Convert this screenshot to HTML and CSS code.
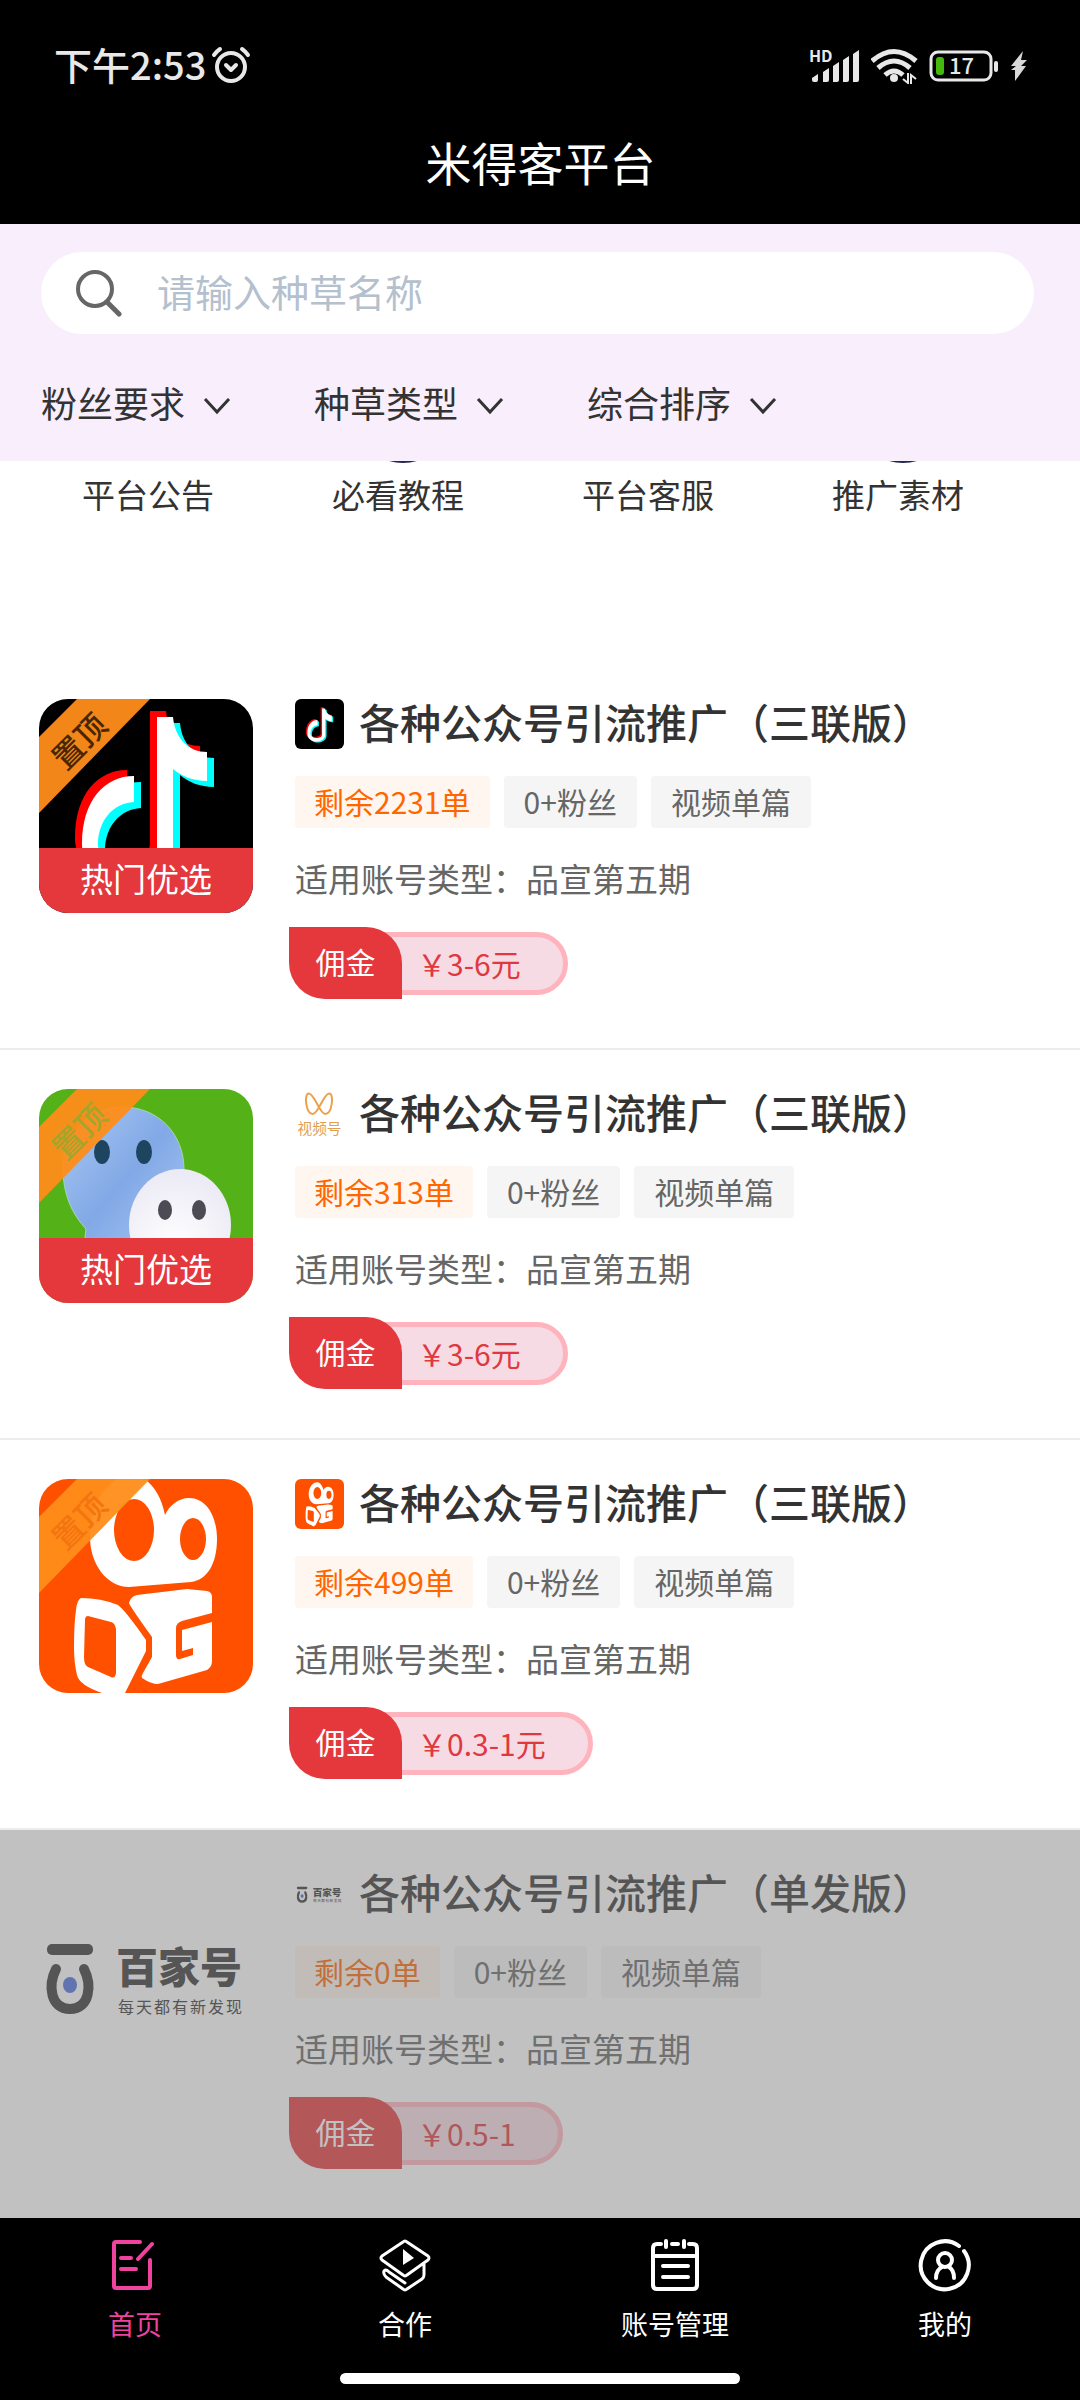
FILE: index.html
```html
<!DOCTYPE html>
<html lang="zh-CN">
<head>
  <meta charset="UTF-8" />
  <meta name="viewport" content="width=device-width, initial-scale=1" />
  <title>米得客平台</title>
  <link rel="stylesheet" href="styles.css">
</head>
<body>
  <!-- shared logos -->
  <svg class="defs" width="0" height="0" aria-hidden="true">
    <defs>
      <linearGradient id="blueFace" x1="0" y1="0" x2="1" y2="1">
        <stop offset="0" stop-color="#a9c8f3" />
        <stop offset="0.5" stop-color="#82a9e6" />
        <stop offset="1" stop-color="#a9c6f3" />
      </linearGradient>
      <radialGradient id="whiteFace" cx="0.45" cy="0.7" r="0.7">
        <stop offset="0" stop-color="#ffffff" />
        <stop offset="1" stop-color="#ebeaf5" />
      </radialGradient>
      <path id="note" d="M118 18H134C136 40 150 53 168 53V82C154 82 142 77 134 70V150C134 170 115 186 89 186C63 186 43 170 43 145C43 101 66 77 95 77V103C74 104 59 122 59 145C59 160 72 168 90 168C105 168 118 163 118 150Z" />
      <symbol id="douyin" overflow="visible">
        <use href="#note" x="-7" y="-6" fill="#ff0000" />
        <use href="#note" x="7" y="6" fill="#00ffff" />
        <use href="#note" fill="#ffffff" />
      </symbol>
      <symbol id="kuaishou" overflow="visible">
        <g fill="#ffffff" fill-rule="evenodd">
          <path d="M51 58C51 25 68-4 95-4C110-2 122 15 126 36C130 27 139 19 150 19C168 19 178 38 178 60C178 85 168 101 152 103L90 108C68 108 51 85 51 58ZM75 51a20 31 0 1 0 40 0a20 31 0 1 0-40 0ZM141 60a13 21 0 1 0 26 0a13 21 0 1 0-26 0Z" />
          <path d="M42 119Q62 119 79 126Q86 131 107 161V172L86 214L76 222L63 214Q40 206 38 196Q35 184 35 168Q35 145 37 131Q38 121 42 119ZM49 137Q46 137 46 141L45 178Q45 186 49 188L72 198Q76 200 77 194V150Q76 144 72 143Z" />
          <path d="M90 124Q92 117 98 116L148 110L168 112Q173 113 173 118V134L143 142Q137 144 137 149V176Q137 181 141 180L154 176V169L143 172V151L173 143V182Q173 188 168 191L119 205Q112 205 103 199Q102 197 104 194L113 178V158Q92 129 90 124Z" />
        </g>
      </symbol>
      <symbol id="baijia" overflow="visible">
        <rect x="8" y="75" width="46" height="11" rx="5" fill="#333" />
        <path d="M17 100C9 116 11 140 31 140C51 140 53 116 45 100" fill="none" stroke="#333" stroke-width="10" stroke-linecap="round" />
        <ellipse cx="31" cy="116" rx="7" ry="8" fill="#4a6fe0" />
        <text class="baijia-name" x="77" y="114">百家号</text>
        <text class="baijia-slogan" x="79 97 115 133 151 169 187" y="144">每天都有新发现</text>
      </symbol>
      <symbol id="ribbon" overflow="visible">
        <path d="M38 0H111L0 114V38Z" fill="#ff8d19" fill-opacity="0.95" />
      </symbol>
    </defs>
  </svg>

  <header class="top">
    <div class="status">
      <div class="status-side">
        <span class="time">下午2:53</span>
        <svg width="40" height="40" viewBox="0 0 40 40" fill="none" stroke="#e8e8e8" stroke-width="4" stroke-linecap="round" stroke-linejoin="round">
          <circle cx="20" cy="21" r="14" />
          <path d="M15 19l5 5 5-5" />
          <path d="M3 9q3-4 6-6M37 9q-3-4-6-6" />
        </svg>
      </div>
      <div class="status-side status-right">
        <svg width="51" height="48" viewBox="0 -6 51 48" fill="#e8e8e8">
          <text class="hd" x="0" y="14">HD</text>
          <path d="M3 34v-4l6-4v6q0 2-2 2H5q-2 0-2-2M14 34V24l6-4v12q0 2-2 2zM24 34V18l6-4v18q0 2-2 2zM34 34V12l6-4v24q0 2-2 2zM44 34V6l6-4v30q0 2-2 2z" />
        </svg>
        <svg width="47" height="36" viewBox="0 0 47 36" fill="none" stroke="#e8e8e8" stroke-width="5">
          <path d="M1 13Q23 -6 45 13M7 20Q23 6 39 20M14 27Q23 19 32 27" />
          <circle cx="23" cy="30" r="4" fill="#e8e8e8" stroke="none" />
          <path d="M37 25v10l-5-4M40 36V27l5 4" stroke-width="2" />
        </svg>
        <svg width="70" height="48" viewBox="0 -8 70 48">
          <rect x="2" y="2" width="60" height="28" rx="7" fill="none" stroke="#e8e8e8" stroke-width="3" />
          <rect x="65" y="11" width="4" height="11" rx="2" fill="#e8e8e8" />
          <rect x="7" y="7" width="8" height="18" rx="3" fill="#44b80c" />
          <text class="battery" x="20" y="24">17</text>
        </svg>
        <svg width="17" height="32" viewBox="0 0 17 32" fill="#d8d8d8">
          <path d="M13 1L1 16h5l-5 4h4L5 31L16 16h-5l6-6h-6z" />
        </svg>
      </div>
    </div>
    <h1>米得客平台</h1>
  </header>

  <section class="search-panel">
    <label class="search">
      <svg width="48" height="48" viewBox="0 0 48 48" fill="none" stroke="#666" stroke-linecap="round">
        <circle cx="20" cy="20" r="17" stroke-width="4" />
        <path d="M32 33l12 12" stroke-width="5" />
      </svg>
      <input type="text" placeholder="请输入种草名称" aria-label="请输入种草名称" />
    </label>
    <div class="filters">
      <label class="filter">
        <select aria-label="粉丝要求"><option>粉丝要求</option></select>
        <svg width="28" height="18" viewBox="0 0 28 18"><path d="M2 2l12 13L26 2" /></svg>
      </label>
      <label class="filter">
        <select aria-label="种草类型"><option>种草类型</option></select>
        <svg width="28" height="18" viewBox="0 0 28 18"><path d="M2 2l12 13L26 2" /></svg>
      </label>
      <label class="filter">
        <select aria-label="综合排序"><option>综合排序</option></select>
        <svg width="28" height="18" viewBox="0 0 28 18"><path d="M2 2l12 13L26 2" /></svg>
      </label>
    </div>
  </section>

  <main>
    <nav class="menu">
      <a href="#"><svg width="100" height="9"></svg>平台公告</a>
      <a href="#"><svg width="100" height="9" viewBox="0 0 100 9"><circle cx="55" cy="-47" r="49" fill="#24264f" /></svg>必看教程</a>
      <a href="#"><svg width="100" height="9"></svg>平台客服</a>
      <a href="#"><svg width="100" height="9" viewBox="0 0 100 9"><circle cx="55" cy="-47" r="49" fill="#24264f" /></svg>推广素材</a>
    </nav>

    <article class="task">
      <div class="cover black">
        <svg viewBox="0 0 214 214">
          <use href="#douyin" />
          <use href="#ribbon" />
          <text class="pin" x="0" y="0" transform="translate(39 41) rotate(-45)" fill="#4a2600">置顶</text>
        </svg>
        <span class="hot">热门优选</span>
      </div>
      <div class="info">
        <div class="title">
          <svg class="mini black" viewBox="-20 -28 250 250"><use href="#douyin" /></svg>
          <h2>各种公众号引流推广（三联版）</h2>
        </div>
        <div class="tags"><span class="tag left">剩余2231单</span><span class="tag">0+粉丝</span><span class="tag">视频单篇</span></div>
        <p class="type">适用账号类型：品宣第五期</p>
        <div class="pay"><span class="pay-label">佣金</span><span class="pay-sum">￥3-6元</span></div>
      </div>
    </article>

    <article class="task">
      <div class="cover green">
        <svg viewBox="0 0 214 214">
          <path d="M84 18C119 18 145 45 145 80C145 116 119 150 84 150L44 165L47 140C32 124 24 104 24 80C24 45 50 18 84 18Z" fill="url(#blueFace)" stroke="#a3d5b0" stroke-width="1" />
          <ellipse cx="63" cy="63" rx="8" ry="12" fill="#1d4560" />
          <ellipse cx="105" cy="63" rx="8" ry="12" fill="#1d4560" />
          <ellipse cx="141" cy="136" rx="51" ry="56" fill="url(#whiteFace)" />
          <ellipse cx="126" cy="121" rx="7" ry="10" fill="#4c4a52" />
          <ellipse cx="160" cy="121" rx="7" ry="10" fill="#4c4a52" />
          <use href="#ribbon" />
          <text class="pin" x="0" y="0" transform="translate(39 41) rotate(-45)" fill="#a5a52c">置顶</text>
        </svg>
        <span class="hot">热门优选</span>
      </div>
      <div class="info">
        <div class="title">
          <svg class="mini" viewBox="0 0 50 50">
            <path d="M14 4C9 4 11 25 18 25C24 25 29 4 35 4C40 4 38 25 31 25C25 25 20 4 14 4Z" fill="none" stroke="#eca04a" stroke-width="2" />
            <text class="channel" x="25" y="45">视频号</text>
          </svg>
          <h2>各种公众号引流推广（三联版）</h2>
        </div>
        <div class="tags"><span class="tag left">剩余313单</span><span class="tag">0+粉丝</span><span class="tag">视频单篇</span></div>
        <p class="type">适用账号类型：品宣第五期</p>
        <div class="pay"><span class="pay-label">佣金</span><span class="pay-sum">￥3-6元</span></div>
      </div>
    </article>

    <article class="task">
      <div class="cover orange">
        <svg viewBox="0 0 214 214">
          <use href="#kuaishou" />
          <use href="#ribbon" />
          <text class="pin" x="0" y="0" transform="translate(39 41) rotate(-45)" fill="#f47410">置顶</text>
        </svg>
      </div>
      <div class="info">
        <div class="title">
          <svg class="mini orange" viewBox="-19 -18 250 250"><use href="#kuaishou" /></svg>
          <h2>各种公众号引流推广（三联版）</h2>
        </div>
        <div class="tags"><span class="tag left">剩余499单</span><span class="tag">0+粉丝</span><span class="tag">视频单篇</span></div>
        <p class="type">适用账号类型：品宣第五期</p>
        <div class="pay"><span class="pay-label">佣金</span><span class="pay-sum">￥0.3-1元</span></div>
      </div>
    </article>

    <article class="task sold-out">
      <div class="cover">
        <svg viewBox="0 0 214 214"><use href="#baijia" /></svg>
      </div>
      <div class="info">
        <div class="title">
          <svg class="mini" viewBox="0 0 214 214"><use href="#baijia" /></svg>
          <h2>各种公众号引流推广（单发版）</h2>
        </div>
        <div class="tags"><span class="tag left">剩余0单</span><span class="tag">0+粉丝</span><span class="tag">视频单篇</span></div>
        <p class="type">适用账号类型：品宣第五期</p>
        <div class="pay"><span class="pay-label">佣金</span><span class="pay-sum">￥0.5-1</span></div>
      </div>
    </article>
  </main>

  <footer class="bottom">
    <nav class="tabs">
      <a href="#" class="active">
        <svg width="54" height="54" viewBox="0 0 54 54" stroke-width="4">
          <path d="M32 4H8Q6 4 6 6V48Q6 50 8 50H40Q42 50 42 48V22M44 6L30 21M13 20H23M13 31H28" />
        </svg>
        首页
      </a>
      <a href="#">
        <svg width="54" height="54" viewBox="0 0 54 54" stroke-width="3">
          <path d="M25 4Q27 2 29 4L50 18Q52 20 50 22L29 37Q27 39 25 37L4 22Q2 20 4 18ZM46 26V37Q46 39 44 41L29 51Q27 53 25 51L8 39Q5 36 6 33Q8 31 11 34L27 45" />
          <path d="M25 11L36 20L25 27Z" fill="#fff" stroke="none" />
        </svg>
        合作
      </a>
      <a href="#">
        <svg width="54" height="54" viewBox="0 0 54 54" stroke-width="4">
          <path d="M13 6H9Q5 6 5 10V47Q5 51 9 51H45Q49 51 49 47V10Q49 6 45 6H41M24 6H30M5 18H49M18 3V9M36 3V9M15 28H40M15 39H40" />
        </svg>
        账号管理
      </a>
      <a href="#">
        <svg width="54" height="54" viewBox="0 0 54 54" stroke-width="4">
          <path d="M41 8A24 24 0 1 0 46 13" />
          <circle cx="27" cy="22" r="7" />
          <path d="M18 40Q18 32 24 29M36 40Q36 32 31 29" />
        </svg>
        我的
      </a>
    </nav>
    <div class="home-bar"></div>
  </footer>
</body>
</html>
```
FILE: styles.css
```css
* {
  box-sizing: border-box;
}
body {
  margin: 0;
  min-height: 100vh;
  display: flex;
  flex-direction: column;
  font-family: "Noto Sans CJK SC", "Noto Sans", sans-serif;
  background-color: #ffffff;
  color: #333333;
}
h1, h2, p {
  margin: 0;
}
a {
  color: inherit;
  text-decoration: none;
}
svg {
  display: block;
  flex-shrink: 0;
}
.defs {
  position: absolute;
}

/* top bar */
.top {
  background: #000000;
  color: #ffffff;
  padding: 42px 53px 33px 54px;
}
.status {
  display: flex;
  justify-content: space-between;
  height: 48px;
  color: #e8e8e8;
}
.status-side {
  display: flex;
  align-items: center;
  gap: 5px;
}
.status-right {
  gap: 11px;
}
.time {
  padding-bottom: 4px;
  font-size: 38px;
  line-height: 44px;
  font-weight: 500;
}
.hd {
  font-size: 16px;
  font-weight: 700;
}
.battery {
  font-size: 22px;
  font-weight: 500;
  fill: #e8e8e8;
}
h1 {
  margin-top: 41px;
  font-size: 46px;
  line-height: 60px;
  font-weight: 400;
  text-align: center;
}

/* search and filters */
.search-panel {
  background: #f8eefc;
  padding: 28px 46px 30px 41px;
}
.search {
  display: flex;
  align-items: center;
  gap: 34px;
  height: 82px;
  padding: 0 34px;
  border-radius: 41px;
  background: #ffffff;
}
.search input {
  flex: 1;
  min-width: 0;
  padding: 0 0 4px;
  border: 0;
  outline: 0;
  background: transparent;
  font-family: inherit;
  font-size: 38px;
  line-height: 56px;
}
.search input::placeholder {
  color: #b4c0cd;
}
.filters {
  display: flex;
  gap: 81px;
  margin-top: 43px;
}
.filter {
  position: relative;
}
.filter select {
  display: block;
  width: 192px;
  height: 54px;
  padding: 0 0 4px;
  border: 0;
  appearance: none;
  background: transparent;
  color: #333333;
  font-family: inherit;
  font-size: 36px;
  line-height: 50px;
}
.filter svg {
  position: absolute;
  right: 2px;
  top: 20px;
  fill: none;
  stroke: #333333;
  stroke-width: 3;
  pointer-events: none;
}

/* shortcuts */
.menu {
  display: grid;
  grid-template-columns: repeat(4, 1fr);
  padding: 0 57px 142px 23px;
}
.menu a {
  display: flex;
  flex-direction: column;
  align-items: center;
  font-size: 33px;
  line-height: 48px;
}

/* task list */
.task {
  position: relative;
  display: flex;
  gap: 42px;
  padding: 39px 39px 49px;
  border-bottom: 2px solid #ececec;
}
.cover {
  position: relative;
  flex-shrink: 0;
  width: 214px;
  height: 214px;
  border-radius: 29px;
  overflow: hidden;
}
.black {
  background: #000000;
}
.green {
  background: #54b218;
}
.orange {
  background: #ff5000;
}
.pin {
  font-size: 31px;
  font-weight: 500;
  text-anchor: middle;
  dominant-baseline: central;
}
.hot {
  position: absolute;
  left: 0;
  right: 0;
  bottom: 0;
  padding-bottom: 4px;
  background: #e4383c;
  color: #ffffff;
  font-size: 33px;
  line-height: 61px;
  text-align: center;
}
.info {
  flex: 1;
  min-width: 0;
}
.title {
  display: flex;
  align-items: center;
  gap: 15px;
}
.mini {
  width: 49px;
  height: 50px;
  border-radius: 6px;
}
.channel {
  font-size: 15px;
  text-anchor: middle;
  fill: #dfa052;
}
.title h2 {
  padding-bottom: 6px;
  font-size: 41px;
  line-height: 44px;
  font-weight: 500;
  white-space: nowrap;
}
.tags {
  display: flex;
  gap: 14px;
  margin-top: 27px;
}
.tag {
  padding: 0 20px 2px;
  border-radius: 4px;
  background: #f5f5f5;
  color: #666666;
  font-size: 30px;
  line-height: 50px;
}
.tag.left {
  padding: 0 19px 2px;
  background: #fff6ef;
  color: #ff6600;
}
.type {
  margin-top: 25px;
  font-size: 33px;
  line-height: 50px;
  color: #666666;
}
.pay {
  display: flex;
  align-items: center;
  margin: 24px 0 0 -6px;
  font-size: 30px;
}
.pay-label {
  position: relative;
  width: 113px;
  padding-bottom: 4px;
  border-radius: 0 36px 0 36px;
  background: #e4383c;
  color: #ffffff;
  line-height: 68px;
  text-align: center;
}
.pay-sum {
  margin-left: -36px;
  padding: 0 42px 0 46px;
  border: 5px solid #ffb3bd;
  border-radius: 0 32px 32px 0;
  background: #f6dbe5;
  color: #e0383f;
  line-height: 53px;
}
.baijia-name {
  font-size: 42px;
  font-weight: 900;
  fill: #333333;
}
.baijia-slogan {
  font-size: 16px;
  fill: #333333;
}
.sold-out {
  flex-grow: 1;
  border-bottom: 0;
}
.sold-out::after {
  content: "";
  position: absolute;
  inset: 0;
  background: rgba(123, 123, 123, 0.47);
}

/* tab bar */
.bottom {
  position: sticky;
  bottom: 0;
  margin-top: auto;
  padding: 20px 0 16px;
  background: #000000;
  color: #ffffff;
}
.tabs {
  display: grid;
  grid-template-columns: repeat(4, 1fr);
}
.tabs a {
  display: flex;
  flex-direction: column;
  align-items: center;
  gap: 12px;
  font-size: 27px;
  line-height: 40px;
}
.tabs svg {
  fill: none;
  stroke: currentColor;
  stroke-linecap: round;
  stroke-linejoin: round;
}
.tabs .active {
  color: #f043a0;
}
.home-bar {
  width: 37%;
  height: 11px;
  margin: 29px auto 0;
  border-radius: 6px;
  background: #ffffff;
}
```
